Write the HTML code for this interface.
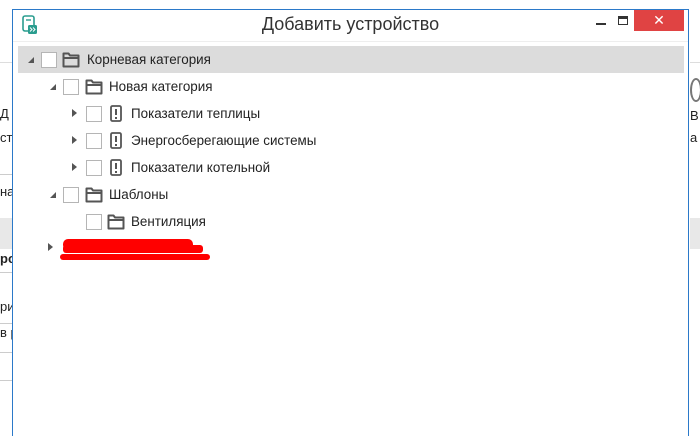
<!DOCTYPE html>
<html style="width:700px;height:436px;overflow:hidden"><head><meta charset="utf-8"><style>
html,body{margin:0;width:700px;height:436px;overflow:hidden}
body{background:#fff;position:relative;font-family:"Segoe UI","Liberation Sans","DejaVu Sans",sans-serif;}
.a{position:absolute}
.bg{font-size:13px;color:#222}
.win{left:12px;top:9px;width:677px;height:427px;border:1px solid #2b79c9;border-bottom:none;background:#fff;box-sizing:border-box;overflow:hidden}
.title{left:0;width:675px;font-size:18px;color:#333;text-align:center;top:4px}
.row{position:absolute;height:26px;font-size:13.4px;color:#222;line-height:26px}
.cb{position:absolute;top:5px;width:14px;height:14px;border:1px solid #b5b5b5;background:#fff}
.exp{position:absolute;top:10px;width:0;height:0}
.t{position:absolute;white-space:nowrap}
svg{position:absolute}
</style></head><body>
<div class="a" style="left:0;top:62px;width:12px;height:1px;background:#ddd"></div>
<div class="a bg" style="left:0;top:106px">Д</div>
<div class="a bg" style="left:0;top:130px">ст</div>
<div class="a" style="left:0;top:174px;width:12px;height:1px;background:#ccc"></div>
<div class="a bg" style="left:0;top:184px">на</div>
<div class="a" style="left:0;top:218px;width:12px;height:31px;background:#e8e8e8"></div>
<div class="a bg" style="left:0;top:251px;font-weight:bold">ро</div>
<div class="a" style="left:0;top:272px;width:12px;height:1px;background:#ccc"></div>
<div class="a bg" style="left:0;top:299px">ри</div>
<div class="a" style="left:0;top:323px;width:12px;height:1px;background:#ccc"></div>
<div class="a bg" style="left:0;top:325px">в р</div>
<div class="a" style="left:0;top:352px;width:12px;height:1px;background:#ccc"></div>
<div class="a" style="left:0;top:380px;width:12px;height:1px;background:#ccc"></div>
<div class="a" style="left:690px;top:62px;width:10px;height:1px;background:#ddd"></div>
<div class="a" style="left:690px;top:78px;width:12px;height:24px;border:2px solid #777;border-radius:50%;box-sizing:border-box"></div>
<div class="a bg" style="left:690px;top:108px">В</div>
<div class="a bg" style="left:690px;top:130px">а</div>
<div class="a" style="left:690px;top:218px;width:10px;height:31px;background:#e8e8e8"></div>

<div class="a win">
 <svg style="left:9px;top:5px" width="16" height="20" viewBox="0 0 16 20"><rect x="1" y="1" width="11" height="15" rx="2" fill="none" stroke="#2a9d8f" stroke-width="1.6"/><line x1="4" y1="5" x2="9" y2="5" stroke="#2a9d8f" stroke-width="1.4"/><rect x="6" y="10" width="9" height="9" rx="1.5" fill="#2a9d8f"/><path d="M8 12.5l2 2-2 2M11 12.5l2 2-2 2" stroke="#fff" fill="none" stroke-width="1"/></svg>
 <div class="a title">Добавить устройство</div>
 <div class="a" style="left:583px;top:13px;width:10px;height:2px;background:#333"></div>
 <div class="a" style="left:605px;top:6px;width:10px;height:9px;border:1.5px solid #333;border-top-width:3px;box-sizing:border-box"></div>
 <div class="a" style="left:621px;top:0;width:50px;height:21px;background:#e04343;color:#fff;font-size:14px;font-weight:bold;text-align:center;line-height:21px">✕</div>
 <div class="a" style="left:0;top:31px;width:675px;height:1px;background:#eee"></div>
 <div class="a" style="left:5px;top:36px;width:666px;height:27px;background:#dcdcdc"></div>
</div>

<div class="row" style="left:0;top:47px;width:700px">
 <div class="exp" style="left:28px;top:10px;border-left:6px solid transparent;border-bottom:6px solid #555"></div>
 <div class="cb" style="left:41px"></div>
 <svg style="left:62px;top:4px" width="18" height="17"><path d="M1.5 2.5h5l1.5 2h8.5v11h-15z M1.5 7h15" fill="none" stroke="#555" stroke-width="2" stroke-linejoin="round"/></svg>
 <div class="t" style="left:87px">Корневая категория</div>
</div>
<div class="row" style="left:0;top:74px">
 <div class="exp" style="left:50px;border-left:6px solid transparent;border-bottom:6px solid #555"></div>
 <div class="cb" style="left:63px"></div>
 <svg style="left:85px;top:4px" width="18" height="17"><path d="M1.5 2.5h5l1.5 2h8.5v11h-15z M1.5 7h15" fill="none" stroke="#555" stroke-width="2" stroke-linejoin="round"/></svg>
 <div class="t" style="left:109px">Новая категория</div>
</div>
<div class="row" style="left:0;top:101px">
 <div class="exp" style="left:72px;top:8px;border-top:4px solid transparent;border-bottom:4px solid transparent;border-left:5px solid #555"></div>
 <div class="cb" style="left:86px"></div>
 <svg style="left:110px;top:4px" width="12" height="17"><rect x="1" y="1" width="10" height="15" rx="1.5" fill="none" stroke="#555" stroke-width="1.8"/><rect x="5" y="4" width="2" height="6" fill="#555"/><rect x="5" y="12" width="2" height="2" fill="#555"/></svg>
 <div class="t" style="left:131px">Показатели теплицы</div>
</div>
<div class="row" style="left:0;top:128px">
 <div class="exp" style="left:72px;top:8px;border-top:4px solid transparent;border-bottom:4px solid transparent;border-left:5px solid #555"></div>
 <div class="cb" style="left:86px"></div>
 <svg style="left:110px;top:4px" width="12" height="17"><rect x="1" y="1" width="10" height="15" rx="1.5" fill="none" stroke="#555" stroke-width="1.8"/><rect x="5" y="4" width="2" height="6" fill="#555"/><rect x="5" y="12" width="2" height="2" fill="#555"/></svg>
 <div class="t" style="left:131px">Энергосберегающие системы</div>
</div>
<div class="row" style="left:0;top:155px">
 <div class="exp" style="left:72px;top:8px;border-top:4px solid transparent;border-bottom:4px solid transparent;border-left:5px solid #555"></div>
 <div class="cb" style="left:86px"></div>
 <svg style="left:110px;top:4px" width="12" height="17"><rect x="1" y="1" width="10" height="15" rx="1.5" fill="none" stroke="#555" stroke-width="1.8"/><rect x="5" y="4" width="2" height="6" fill="#555"/><rect x="5" y="12" width="2" height="2" fill="#555"/></svg>
 <div class="t" style="left:131px">Показатели котельной</div>
</div>
<div class="row" style="left:0;top:182px">
 <div class="exp" style="left:50px;border-left:6px solid transparent;border-bottom:6px solid #555"></div>
 <div class="cb" style="left:63px"></div>
 <svg style="left:85px;top:4px" width="18" height="17"><path d="M1.5 2.5h5l1.5 2h8.5v11h-15z M1.5 7h15" fill="none" stroke="#555" stroke-width="2" stroke-linejoin="round"/></svg>
 <div class="t" style="left:109px">Шаблоны</div>
</div>
<div class="row" style="left:0;top:209px">
 <div class="cb" style="left:86px"></div>
 <svg style="left:107px;top:4px" width="18" height="17"><path d="M1.5 2.5h5l1.5 2h8.5v11h-15z M1.5 7h15" fill="none" stroke="#555" stroke-width="2" stroke-linejoin="round"/></svg>
 <div class="t" style="left:131px">Вентиляция</div>
</div>
<div class="a" style="left:48px;top:243px;border-top:4px solid transparent;border-bottom:4px solid transparent;border-left:5px solid #555"></div>
<div class="a" style="left:63px;top:239px;width:130px;height:11px;background:#f00;border-radius:5px"></div>
<div class="a" style="left:63px;top:245px;width:140px;height:8px;background:#f00;border-radius:3px"></div>
<div class="a" style="left:60px;top:254px;width:150px;height:6px;background:#f00;border-radius:3px"></div>
</body></html>
